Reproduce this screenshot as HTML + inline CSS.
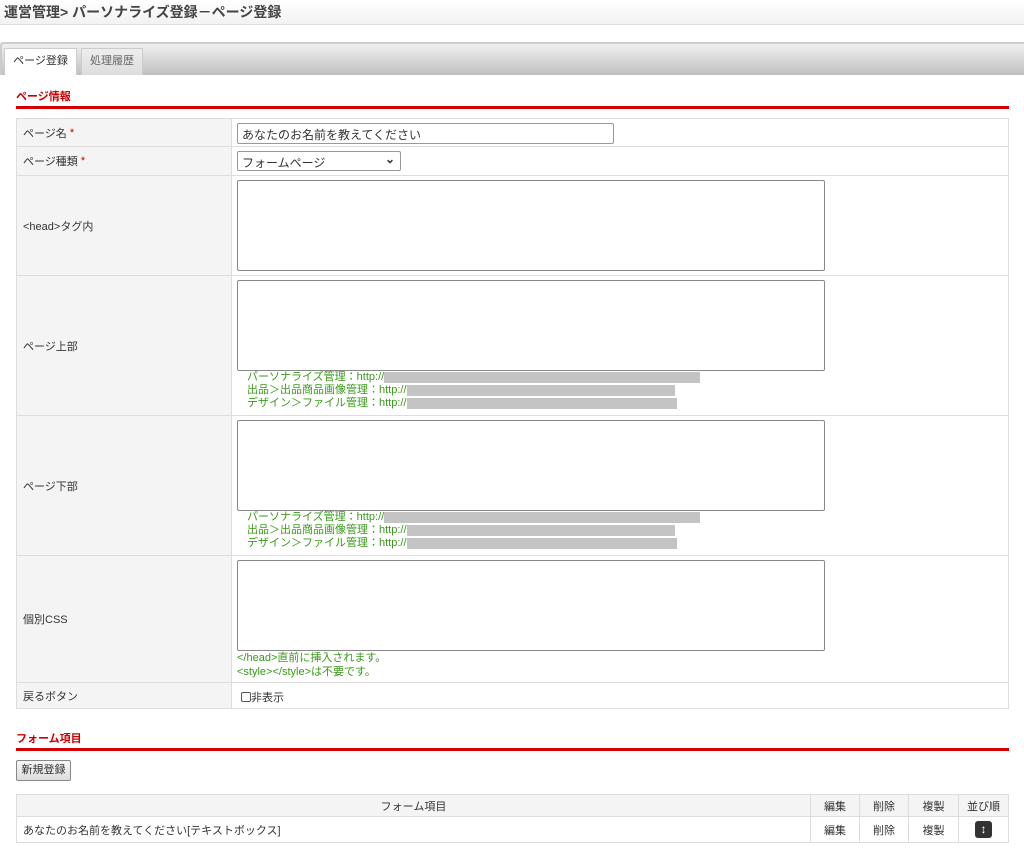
<!DOCTYPE html>
<html><head><meta charset="utf-8"><style>
*{box-sizing:border-box;margin:0;padding:0}
body{width:1024px;height:851px;background:#fff;font-family:"Liberation Sans","Noto Sans CJK JP",sans-serif;font-size:11px;color:#333;position:relative;overflow:hidden}
.a{position:absolute}
.hdr{left:0;top:0;width:1024px;height:25px;background:linear-gradient(#fff,#f2f2f2);border-bottom:1px solid #ddd}
.hdr span{position:absolute;left:4px;top:2px;font-size:14px;font-weight:bold;color:#444}
.tabs{left:0;top:42px;width:1024px;height:33px;background:linear-gradient(#f0f0f0,#c0c0c0);border-top:2px solid #ccc;border-left:2px solid #ccc;border-radius:3px 0 0 0}
.tab{top:48px;height:27px;font-size:11px;text-align:center;line-height:25px;border:1px solid #ccc;border-bottom:none}
.sec{left:16px;color:#c00;font-size:11px;font-weight:600}
.line{left:16px;width:993px;height:3px;background:#d40000}
.row{left:16px;width:993px;border:1px solid #ddd;border-top:none;background:#fff}
.lab{position:absolute;left:0;top:0;bottom:0;width:215px;background:#f3f4f3;border-right:1px solid #ddd;padding-left:6px;display:flex;align-items:center}
.req{color:#c00}
.in{border:1px solid #999;border-radius:2px;background:#fff}
.ta{border:1px solid #888;border-radius:2px;background:#fff;width:588px;height:91px}
.g{color:#3a9a1a;font-size:11px;line-height:13px}
.bl{display:inline-block;background:#c4c4c4;height:11px;vertical-align:middle}
td{border:1px solid #ddd;text-align:center;height:22px;font-size:11px}
</style></head><body>
<div class="a hdr"><span>運営管理&gt; パーソナライズ登録－ページ登録</span></div>
<div class="a tabs"></div>
<div class="a tab" style="left:4px;width:73px;background:#fff">ページ登録</div>
<div class="a tab" style="left:81px;width:62px;background:linear-gradient(#eee,#ddd);color:#666">処理履歴</div>
<div class="a sec" style="top:88px">ページ情報</div>
<div class="a line" style="top:106px"></div>
<div class="a row" style="top:118px;height:29px;border-top:1px solid #ddd"><div class="lab">ページ名 <span class="req">&nbsp;*</span></div>
<div class="a in" style="left:220px;top:4px;width:377px;height:21px;padding:2px 4px;font-size:12px">あなたのお名前を教えてください</div></div>
<div class="a row" style="top:147px;height:29px"><div class="lab">ページ種類 <span class="req">&nbsp;*</span></div>
<div class="a in" style="left:220px;top:4px;width:164px;height:20px;padding:2px 4px;font-size:12px">フォームページ<span style="position:absolute;right:5px;top:0;font-weight:bold">⌄</span></div></div>
<div class="a row" style="top:176px;height:100px"><div class="lab">&lt;head&gt;タグ内</div>
<div class="a ta" style="left:220px;top:4px"></div></div>
<div class="a row" style="top:276px;height:140px"><div class="lab">ページ上部</div>
<div class="a ta" style="left:220px;top:4px"></div>
<div class="a g" style="left:230px;top:95px">パーソナライズ管理：http://<span class="bl" style="width:316px"></span><br>出品＞出品商品画像管理：http://<span class="bl" style="width:268px"></span><br>デザイン＞ファイル管理：http://<span class="bl" style="width:270px"></span></div></div>
<div class="a row" style="top:416px;height:140px"><div class="lab">ページ下部</div>
<div class="a ta" style="left:220px;top:4px"></div>
<div class="a g" style="left:230px;top:95px">パーソナライズ管理：http://<span class="bl" style="width:316px"></span><br>出品＞出品商品画像管理：http://<span class="bl" style="width:268px"></span><br>デザイン＞ファイル管理：http://<span class="bl" style="width:270px"></span></div></div>
<div class="a row" style="top:556px;height:127px"><div class="lab">個別CSS</div>
<div class="a ta" style="left:220px;top:4px"></div>
<div class="a g" style="left:220px;top:95px;line-height:14px">&lt;/head&gt;直前に挿入されます。<br>&lt;style&gt;&lt;/style&gt;は不要です。</div></div>
<div class="a row" style="top:683px;height:26px"><div class="lab">戻るボタン</div>
<div class="a" style="left:224px;top:6px"><span style="display:inline-block;width:10px;height:10px;border:1px solid #555;border-radius:2px;vertical-align:-1px"></span>非表示</div></div>
<div class="a sec" style="top:730px">フォーム項目</div>
<div class="a line" style="top:748px"></div>
<div class="a" style="left:16px;top:760px;width:55px;height:21px;border:1px solid #888;border-radius:2px;background:linear-gradient(#f6f6f6,#ddd);text-align:center;line-height:19px">新規登録</div>
<table class="a" style="left:16px;top:794px;width:993px;border-collapse:collapse">
<tr style="background:#f3f4f3"><td>フォーム項目</td><td style="width:49px">編集</td><td style="width:49px">削除</td><td style="width:50px">複製</td><td style="width:50px">並び順</td></tr>
<tr style="height:26px"><td style="text-align:left;padding-left:6px">あなたのお名前を教えてください[テキストボックス]</td><td>編集</td><td>削除</td><td>複製</td><td><span style="display:inline-block;width:17px;height:17px;background:#333;border-radius:3px;color:#fff;font-weight:bold;line-height:17px;font-size:12px;vertical-align:middle">↕</span></td></tr>
</table>
</body></html>
